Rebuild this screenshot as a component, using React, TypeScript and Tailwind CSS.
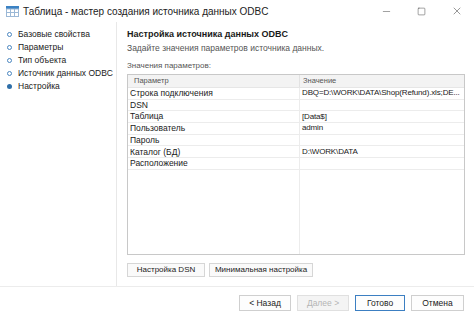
import { Minus, Square, X } from "lucide-react";

const steps = [
  { label: "Базовые свойства", done: false },
  { label: "Параметры", done: false },
  { label: "Тип объекта", done: false },
  { label: "Источник данных ODBC", done: false },
  { label: "Настройка", done: true },
];

const rows = [
  { name: "Строка подключения", value: "DBQ=D:\\WORK\\DATA\\Shop(Refund).xls;DE..." },
  { name: "DSN", value: "" },
  { name: "Таблица", value: "[Data$]" },
  { name: "Пользователь", value: "admin" },
  { name: "Пароль", value: "" },
  { name: "Каталог (БД)", value: "D:\\WORK\\DATA" },
  { name: "Расположение", value: "" },
];

const TableIcon = () => (
  <svg width="13" height="11" viewBox="0 0 13 11">
    <rect x="0" y="0" width="13" height="3" fill="#3b82c4" />
    <rect x="0.5" y="3" width="12" height="7.5" fill="#fff" stroke="#9bb8d6" />
    <line x1="4.5" y1="3" x2="4.5" y2="11" stroke="#9bb8d6" />
    <line x1="8.5" y1="3" x2="8.5" y2="11" stroke="#9bb8d6" />
    <line x1="0" y1="6.5" x2="13" y2="6.5" stroke="#9bb8d6" />
  </svg>
);

export default function App() {
  return (
    <div
      className="w-[474px] h-[319px] bg-white text-[#1a1a1a] flex flex-col overflow-hidden"
      style={{ fontFamily: '"Liberation Sans", Arial, sans-serif' }}
    >
      {/* title bar */}
      <div className="h-[22px] flex items-center pl-[6px] shrink-0">
        <TableIcon />
        <span className="ml-[4px] text-[10px] text-[#222]">Таблица - мастер создания источника данных ODBC</span>
        <div className="ml-auto flex items-center h-full text-[#333]">
          <span className="w-[35px] flex justify-center"><Minus size={11} strokeWidth={1} /></span>
          <span className="w-[35px] flex justify-center"><Square size={9} strokeWidth={1.2} /></span>
          <span className="w-[35px] flex justify-center"><X size={12} strokeWidth={1} /></span>
        </div>
      </div>

      <div className="flex h-[265px] border-b border-[#ececec]">
        {/* steps */}
        <div className="w-[117px] shrink-0 border-r border-[#e8e8e8] pt-[6px] pl-[7px] text-[8.5px]">
          {steps.map((s) => (
            <div key={s.label} className="h-[13px] flex items-center whitespace-nowrap">
              <span
                className={
                  s.done
                    ? "w-[5px] h-[5px] shrink-0 rounded-full bg-[#2f6fa8]"
                    : "w-[5px] h-[5px] shrink-0 rounded-full border border-[#4a86c0]"
                }
              />
              <span className="ml-[6px]">{s.label}</span>
            </div>
          ))}
        </div>

        {/* content */}
        <div className="flex-1 pl-[10px] pr-[9px] pt-[6px] flex flex-col">
          <div className="text-[9px] font-bold h-[12px] leading-[12px]">Настройка источника данных ODBC</div>
          <div className="text-[8.5px] text-[#555] mt-[2px] h-[12px] leading-[12px]">
            Задайте значения параметров источника данных.
          </div>
          <div className="text-[8px] text-[#555] mt-[6px] h-[12px] leading-[12px]">Значения параметров:</div>
          <div className="mt-[2px] h-[181px] border border-[#c8c8c8] flex flex-col text-[8.5px]">
            <div className="flex h-[13px] shrink-0 bg-[#f3f3f3] text-[7.5px] text-[#555] border-b border-[#e6e6e6]">
              <div className="w-[172px] pl-[6px] border-r border-[#e2e2e2] flex items-center">Параметр</div>
              <div className="flex-1 pl-[3px] flex items-center">Значение</div>
            </div>
            {rows.map((r) => (
              <div key={r.name} className="flex h-[11.7px] shrink-0 border-b border-[#ececec]">
                <div className="w-[172px] pl-[2px] border-r border-[#ececec] flex items-center leading-none">{r.name}</div>
                <div className="flex-1 min-w-0 pl-[2px] flex items-center leading-none whitespace-nowrap text-[8px] tracking-[-0.15px]">
                  {r.value}
                </div>
              </div>
            ))}
            <div className="flex flex-1">
              <div className="w-[172px] border-r border-[#ececec]" />
              <div className="flex-1" />
            </div>
          </div>
          <div className="mt-[8px] flex gap-[4px] text-[8px]">
            <button className="w-[78px] h-[14px] border border-[#d6d6d6] bg-[#fafafa] flex items-center justify-center">
              Настройка DSN
            </button>
            <button className="w-[104px] h-[14px] border border-[#d6d6d6] bg-[#fafafa] flex items-center justify-center">
              Минимальная настройка
            </button>
          </div>
        </div>
      </div>

      {/* footer */}
      <div className="flex-1 flex items-center justify-end pr-[10px] gap-[6px] text-[8.5px]">
        <button className="w-[52px] h-[16px] border border-[#cfcfcf] bg-[#fdfdfd] flex items-center justify-center">
          &lt; Назад
        </button>
        <button className="w-[52px] h-[16px] border border-[#e0e0e0] bg-[#f4f4f4] text-[#b5b5b5] flex items-center justify-center">
          Далее &gt;
        </button>
        <button className="w-[50px] h-[16px] border border-[#3c7fc2] bg-[#fdfdfd] flex items-center justify-center">
          Готово
        </button>
        <button className="w-[53px] h-[16px] border border-[#cfcfcf] bg-[#fdfdfd] flex items-center justify-center">
          Отмена
        </button>
      </div>
    </div>
  );
}
